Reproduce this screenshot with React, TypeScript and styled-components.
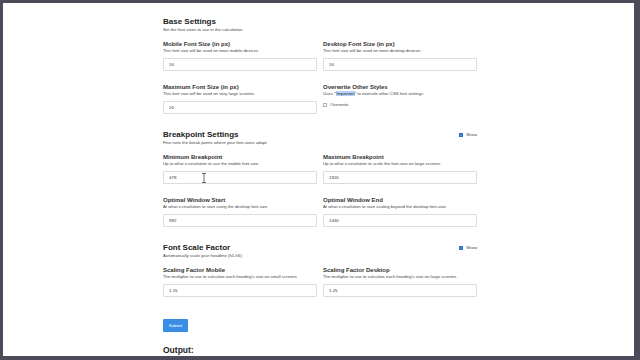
import React from 'react';
import styled, { createGlobalStyle } from 'styled-components';

const GlobalStyle = createGlobalStyle`
  html, body {
    margin: 0;
    padding: 0;
    background: #4b4b59;
  }
  * {
    box-sizing: border-box;
  }
`;

const Frame = styled.div`
  width: 640px;
  height: 360px;
  padding: 3px 6px 4px 3px;
  background: #4b4b59;
`;

const Panel = styled.div`
  position: relative;
  height: 100%;
  background: #ffffff;
  overflow: hidden;
  padding: 14px 0 0 160px;
  font-family: 'Liberation Sans', Arial, sans-serif;
  color: #222;
`;

const Content = styled.form`
  width: 314px;
  display: flex;
  flex-direction: column;
`;

const Section = styled.section`
  display: flex;
  flex-direction: column;
  margin-bottom: 16px;
`;

const HeadRow = styled.div`
  display: flex;
  justify-content: space-between;
  align-items: center;
  height: 10px;
`;

const Heading = styled.h2`
  margin: 0;
  font-size: 8px;
  line-height: 10px;
  font-weight: 700;
  color: #222;
`;

const Small = styled.p`
  margin: 0;
  font-size: 4.3px;
  line-height: 6px;
  color: #444;
`;

const Grid = styled.div`
  display: grid;
  grid-template-columns: 1fr 1fr;
  column-gap: 6px;
  row-gap: 12px;
  margin-top: 7px;
`;

const Field = styled.div`
  display: flex;
  flex-direction: column;
`;

const Label = styled.label`
  font-size: 6px;
  line-height: 8px;
  font-weight: 700;
  color: #333;
`;

const Input = styled.input`
  margin-top: 4px;
  height: 13px;
  width: 100%;
  border: 1px solid #dcdcdc;
  border-radius: 1px;
  padding: 0 0 0 5px;
  font-family: inherit;
  font-size: 4.4px;
  color: #333;
  background: #fff;
  outline: none;
`;

const Check = styled.span<{ $on?: boolean }>`
  display: inline-flex;
  align-items: center;
  justify-content: center;
  width: 4px;
  height: 4px;
  border: 1px solid ${(p) => (p.$on ? '#2c6fce' : '#b0b0b0')};
  background: ${(p) => (p.$on ? '#2c6fce' : '#fff')};
  svg {
    display: block;
  }
`;

const CheckRow = styled.span<{ $top?: number }>`
  display: inline-flex;
  align-items: center;
  gap: 3px;
  margin-top: ${(p) => p.$top ?? 0}px;
  font-size: 4.3px;
  line-height: 6px;
  color: #444;
`;

const Mark = styled.span`
  background: #b3d4fc;
  color: #333;
`;

const SubmitButton = styled.button`
  align-self: flex-start;
  width: 25px;
  height: 13px;
  margin-top: 6px;
  border: none;
  border-radius: 1px;
  background: #3a8de4;
  color: #fff;
  font-family: inherit;
  font-size: 4.4px;
  padding: 0;
`;

const Output = styled.h2`
  margin: 13px 0 0;
  font-size: 8.5px;
  line-height: 10px;
  font-weight: 700;
  color: #222;
`;

const Cursor = styled.svg`
  position: absolute;
  left: 198px;
  top: 170px;
`;

const Tick = () => (
  <svg width="4" height="4" viewBox="0 0 4 4">
    <path d="M0.6 2 L1.6 3 L3.4 0.9" stroke="#fff" strokeWidth="0.8" fill="none" />
  </svg>
);

const ShowToggle = () => (
  <CheckRow>
    <Check $on>
      <Tick />
    </Check>
    Show
  </CheckRow>
);

interface FieldProps {
  label: string;
  hint: React.ReactNode;
  value: string;
}

const NumberField: React.FC<FieldProps> = ({ label, hint, value }) => (
  <Field>
    <Label>{label}</Label>
    <Small>{hint}</Small>
    <Input defaultValue={value} />
  </Field>
);

const App: React.FC = () => {
  return (
    <>
      <GlobalStyle />
      <Frame>
        <Panel>
          <Content onSubmit={(e) => e.preventDefault()}>
            <Section>
              <HeadRow>
                <Heading>Base Settings</Heading>
              </HeadRow>
              <Small>Set the font-sizes to use in the calculation</Small>
              <Grid>
                <NumberField
                  label="Mobile Font Size (in px)"
                  hint="This font size will be used on most mobile devices"
                  value="16"
                />
                <NumberField
                  label="Desktop Font Size (in px)"
                  hint="This font size will be used on most desktop devices"
                  value="16"
                />
                <NumberField
                  label="Maximum Font Size (in px)"
                  hint="This font size will be used on very large screens"
                  value="20"
                />
                <Field>
                  <Label>Overwrite Other Styles</Label>
                  <Small>
                    Uses "<Mark>!important</Mark>" to overrule other CSS font settings
                  </Small>
                  <CheckRow $top={5}>
                    <Check />
                    Overwrite
                  </CheckRow>
                </Field>
              </Grid>
            </Section>

            <Section>
              <HeadRow>
                <Heading>Breakpoint Settings</Heading>
                <ShowToggle />
              </HeadRow>
              <Small>Fine tune the break points where your font-sizes adapt</Small>
              <Grid>
                <NumberField
                  label="Minimum Breakpoint"
                  hint="Up to what x-resolution to use the mobile font-size"
                  value="478"
                />
                <NumberField
                  label="Maximum Breakpoint"
                  hint="Up to what x-resolution to scale the font-size on large screens"
                  value="1920"
                />
                <NumberField
                  label="Optimal Window Start"
                  hint="At what x-resolution to start using the desktop font-size"
                  value="992"
                />
                <NumberField
                  label="Optimal Window End"
                  hint="At what x-resolution to start scaling beyond the desktop font-size"
                  value="1440"
                />
              </Grid>
            </Section>

            <Section>
              <HeadRow>
                <Heading>Font Scale Factor</Heading>
                <ShowToggle />
              </HeadRow>
              <Small>Automatically scale your headline (h1-h6)</Small>
              <Grid>
                <NumberField
                  label="Scaling Factor Mobile"
                  hint="The multiplier to use to calculate each heading's size on small screens"
                  value="1.15"
                />
                <NumberField
                  label="Scaling Factor Desktop"
                  hint="The multiplier to use to calculate each heading's size on large screens"
                  value="1.25"
                />
              </Grid>
            </Section>

            <SubmitButton type="submit">Submit</SubmitButton>
            <Output>Output:</Output>
          </Content>
          <Cursor width="6" height="10" viewBox="0 0 6 10">
            <path d="M1 0.5 H5 M3 0.5 V9.5 M1 9.5 H5" stroke="#444" strokeWidth="0.8" fill="none" />
          </Cursor>
        </Panel>
      </Frame>
    </>
  );
};

export default App;
